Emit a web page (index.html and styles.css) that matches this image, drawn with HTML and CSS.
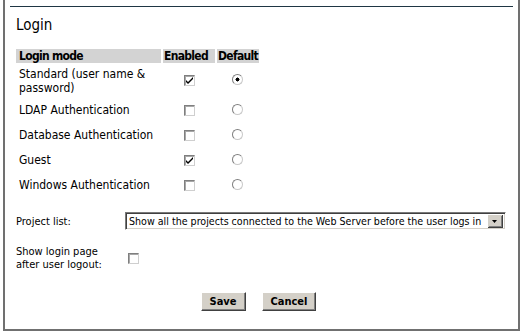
FILE: index.html
```html
<!DOCTYPE html>
<html lang="en">
<head>
  <meta charset="UTF-8">
  <title>Login</title>
  <link rel="stylesheet" href="styles.css">
</head>
<body>
  <div class="panel">
    <div class="rule"></div>
    <h1>Login</h1>

    <table class="modes">
      <tr>
        <th class="col-mode">Login mode</th>
        <th class="col-enabled">Enabled</th>
        <th class="col-default">Default</th>
      </tr>
      <tr>
        <td class="tall">Standard (user name &amp;<br>password)</td>
        <td class="center"><input type="checkbox" class="box" checked></td>
        <td class="center"><input type="radio" name="def" class="dot" checked></td>
      </tr>
      <tr>
        <td>LDAP Authentication</td>
        <td class="center"><input type="checkbox" class="box"></td>
        <td class="center"><input type="radio" name="def" class="dot"></td>
      </tr>
      <tr>
        <td>Database Authentication</td>
        <td class="center"><input type="checkbox" class="box"></td>
        <td class="center"><input type="radio" name="def" class="dot"></td>
      </tr>
      <tr>
        <td>Guest</td>
        <td class="center"><input type="checkbox" class="box" checked></td>
        <td class="center"><input type="radio" name="def" class="dot"></td>
      </tr>
      <tr>
        <td>Windows Authentication</td>
        <td class="center"><input type="checkbox" class="box"></td>
        <td class="center"><input type="radio" name="def" class="dot"></td>
      </tr>
    </table>

    <div class="field project">
      <label class="field-label">Project list:</label>
      <select class="combo">
        <option>Show all the projects connected to the Web Server before the user logs in</option>
      </select>
    </div>

    <div class="field logout">
      <label class="field-label">Show login page<br>after user logout:</label>
      <input type="checkbox" class="box">
    </div>

    <div class="actions">
      <button class="btn">Save</button>
      <button class="btn">Cancel</button>
    </div>
  </div>
</body>
</html>
```

FILE: styles.css
```css
body {
  margin: 0;
  background: #fff;
  font-family: "DejaVu Sans", Tahoma, sans-serif;
  font-stretch: condensed;
  color: #000;
}
.panel {
  margin-left: 3px;
  width: 513px;
  height: 329px;
  border: 2px solid #707070;
  border-top: none;
  overflow: hidden;
}
.rule {
  height: 1px;
  margin: 6px 5px 0 5px;
  background: #1f3644;
}
h1 {
  margin: 9px 0 0 11px;
  font-size: 15px;
  font-weight: normal;
  line-height: 18px;
}
.modes {
  margin: 15px 0 0 9px;
  border-spacing: 2px 0;
  font-size: 12px;
}
.modes th {
  background: #d3d3d3;
  text-align: left;
  font-weight: bold;
  line-height: 14px;
  padding: 0 1px;
  letter-spacing: -0.7px;
  white-space: nowrap;
}
.col-mode {
  width: 141px;
  padding-left: 3px !important;
}
.col-enabled {
  width: 50px;
}
.col-default {
  width: 38px;
}
.modes td {
  padding: 5px 3px 6px;
  line-height: 14px;
  vertical-align: middle;
}
.modes td.tall {
  padding: 4px 3px 3px;
}
.center {
  text-align: center;
}
.box,
.dot {
  appearance: none;
  -webkit-appearance: none;
  margin: 0;
  width: 11px;
  height: 11px;
  vertical-align: middle;
  background: #fff no-repeat center;
}
.box {
  border: 1px solid;
  border-color: #7f7f7f #cfcfcf #cfcfcf #7f7f7f;
  box-shadow: inset 1px 1px 0 #a8a8a8;
}
.box:checked {
  background-image: url("data:image/svg+xml,%3Csvg xmlns='http://www.w3.org/2000/svg' width='7' height='7'%3E%3Cpath d='M0 3 L2 5 L7 0 L7 2 L2 7 L0 5 Z' fill='%23000'/%3E%3C/svg%3E");
}
.dot {
  border-radius: 50%;
  border: 1px solid;
  border-color: #7f7f7f #c8c8c8 #c8c8c8 #7f7f7f;
  position: relative;
  top: -1px;
}
.dot:checked {
  background-image: radial-gradient(circle, #000 0 1.8px, #fff 2.2px);
}
.field {
  display: flex;
  align-items: center;
  margin-left: 11px;
  font-size: 11px;
}
.field-label {
  width: 108px;
  line-height: 13px;
}
.project {
  margin-top: 14px;
}
.combo {
  appearance: none;
  -webkit-appearance: none;
  width: 381px;
  height: 18px;
  margin: 0 0 0 1px;
  padding: 0 20px 0 3px;
  font-family: inherit;
  font-stretch: condensed;
  font-size: 10.6px;
  color: #000;
  border: 1px solid;
  border-color: #7a7a7a #fff #fff #7a7a7a;
  box-shadow: inset 1px 1px 0 #404040, inset -1px -1px 0 #d4d0c8;
  border-radius: 0;
  background: #fff url("data:image/svg+xml,%3Csvg xmlns='http://www.w3.org/2000/svg' width='16' height='14'%3E%3Crect width='16' height='14' fill='%23d4d0c8'/%3E%3Cpath d='M0 0H16V1H1V14H0Z' fill='%23fff'/%3E%3Cpath d='M15 1H16V14H1V13H15Z' fill='%23404040'/%3E%3Cpath d='M14 2H15V13H2V12H14Z' fill='%23808080'/%3E%3Cpath d='M5 6H10L7.5 9Z' fill='%23000'/%3E%3C/svg%3E") no-repeat right 2px center;
}
.logout {
  margin-top: 15px;
}
.logout .field-label {
  width: 112px;
}
.actions {
  display: flex;
  justify-content: center;
  gap: 16px;
  margin-top: 21px;
  padding-right: 6px;
}
.btn {
  font-family: "DejaVu Sans", Tahoma, sans-serif;
  font-stretch: condensed;
  font-size: 11px;
  font-weight: bold;
  height: 19px;
  padding: 0 8px;
  background: #d4d0c8;
  border: 1px solid;
  border-color: #fff #404040 #404040 #fff;
  box-shadow: inset -1px -1px 0 #808080;
  border-radius: 0;
  color: #000;
}
```
